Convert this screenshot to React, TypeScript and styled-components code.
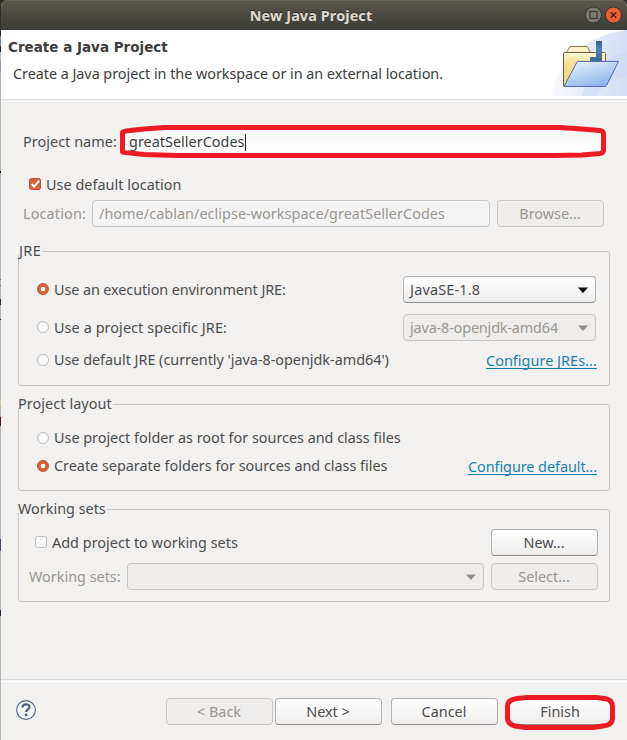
import React from 'react';
import styled, { createGlobalStyle, css } from 'styled-components';

const GlobalStyle = createGlobalStyle`
  * { box-sizing: border-box; }
  body { margin: 0; background: #f2f1f0; overflow: hidden; }
`;

const Desktop = styled.div`
  width: 627px;
  height: 740px;
  padding-left: 1px;
  background: linear-gradient(
    #2f2e2b 0 36px, #5f86a3 36px 46px, #2b2b2b 46px 52px, #b4b6b9 52px 60px, #8e9cb0 60px 72px,
    #b4b4b4 72px 171px, #111 171px 173px, #b0b2b4 173px 279px, #3f7fc0 279px 280px, #b0b2b4 280px 285px,
    #3f7fc0 285px 286px, #aeb2b6 286px 299px, #333 299px 305px, #aeb2b6 305px 319px, #1d1d6a 319px 320px,
    #aeb2b6 320px 399px, #c9cc96 399px 406px, #aeb2b6 406px 417px, #5c0f14 417px 426px, #aeb2b6 426px 539px,
    #3d4a78 539px 551px, #b4b4b4 551px 610px, #20264a 610px 616px, #b4b4b4 616px 740px
  );
  font-family: "Noto Sans", "Open Sans", sans-serif;
  font-size: 14.4px;
  color: #4c4c4c;
`;

const Dialog = styled.div`
  display: flex;
  flex-direction: column;
  width: 626px;
  height: 740px;
  background: #f2f1f0;
  border-radius: 7px 7px 0 0;
  overflow: hidden;
`;

const TitleBar = styled.div`
  position: relative;
  display: flex;
  align-items: center;
  justify-content: center;
  height: 30px;
  padding-right: 6px;
  background: linear-gradient(#5b574c, #3c3b37);
  box-shadow: inset 0 1px #68645a;
  color: #dfdbd2;
  font-weight: 700;
  letter-spacing: 0.12px;
  text-shadow: 0 -1px #2c2b28;
`;

const WindowControls = styled.div`
  position: absolute;
  right: 5px;
  top: 6px;
  display: flex;
  gap: 3px;
`;

const Header = styled.div`
  display: flex;
  justify-content: space-between;
  height: 69px;
  background: #fff;
  color: #3c3c3c;
`;

const HeaderText = styled.div`
  padding: 8px 0 0 7px;
`;

const Title = styled.div`
  font: 700 13.5px/18px "DejaVu Sans", sans-serif;
`;

const Subtitle = styled.div`
  padding: 8px 0 0 5px;
  line-height: 20px;
  letter-spacing: -0.04px;
`;

const Separator = styled.div`
  height: 3px;
  flex: none;
  background: linear-gradient(#dadada 0 1px, #f2f1f0 1px 2px, #fff 2px 3px);
`;

const Body = styled.div`
  flex: 1;
  padding: 23px 0 0 17px;
`;

const Row = styled.div<{ $h: number; $mt?: number; $pl?: number }>`
  display: flex;
  align-items: center;
  height: ${p => p.$h}px;
  margin-top: ${p => p.$mt ?? 0}px;
  padding-left: ${p => p.$pl ?? 0}px;
`;

const Label = styled.span<{ $w?: number; $ls?: number; $off?: boolean }>`
  flex: none;
  width: ${p => (p.$w ? `${p.$w}px` : 'auto')};
  letter-spacing: ${p => p.$ls ?? 0}px;
  line-height: 20px;
  white-space: pre;
  color: ${p => (p.$off ? '#9a9690' : 'inherit')};
`;

const Spacer = styled.div`
  flex: 1;
`;

const disabledSurface = css`
  background: #eeedec;
  border-color: #c8c6c4;
  color: #9a9690;
`;

const ActiveEntry = styled.div`
  position: relative;
  display: flex;
  align-items: center;
  width: 482px;
  height: 28px;
  padding-left: 7px;
  border-radius: 5px;
  background: linear-gradient(#f4f4f4, #fff 70%);
  color: #3c3c3c;
`;

const Caret = styled.i`
  width: 1px;
  height: 17px;
  background: #222;
`;

const Marker = styled.svg`
  position: absolute;
  overflow: visible;
  pointer-events: none;
`;

const EntryMarker = styled(Marker)`
  left: -2px;
  top: -3px;
`;

const ButtonMarker = styled(Marker)`
  left: -3px;
  top: -4px;
`;

const Entry = styled.div`
  display: flex;
  align-items: center;
  width: 398px;
  height: 27px;
  padding-left: 6px;
  border: 1px solid;
  border-radius: 4px;
  ${disabledSurface}
  background: #f5f4f4;
`;

const Button = styled.div<{ $off?: boolean; $ml?: number }>`
  position: relative;
  display: flex;
  align-items: center;
  justify-content: center;
  flex: none;
  width: 107px;
  height: 27px;
  margin-left: ${p => p.$ml ?? 0}px;
  padding-right: 1px;
  border: 1px solid #b3b1af;
  border-bottom-color: #8f8d8b;
  border-radius: 4px;
  background: linear-gradient(#fff, #eeedec);
  ${p => p.$off && disabledSurface}
`;

const Combo = styled.div<{ $w: number; $off?: boolean }>`
  display: flex;
  align-items: center;
  justify-content: space-between;
  width: ${p => p.$w}px;
  height: 27px;
  padding: 0 7px 0 6px;
  border: 1px solid #b3b1af;
  border-bottom-color: #8f8d8b;
  border-radius: 4px;
  background: linear-gradient(#fff, #eeedec);
  ${p => p.$off && disabledSurface}
`;

const Group = styled.div<{ $h: number; $mt: number }>`
  position: relative;
  width: 592px;
  height: ${p => p.$h}px;
  margin-top: ${p => p.$mt}px;
  border: 1px solid #c8c6c4;
  border-radius: 3px;
`;

const Legend = styled.div<{ $ls?: number; $indent?: number }>`
  position: absolute;
  left: -1px;
  top: -12px;
  height: 15px;
  padding: 0 1px 0 ${p => p.$indent ?? 0}px;
  background: #f2f1f0;
  line-height: 21px;
  letter-spacing: ${p => p.$ls ?? 0}px;
  white-space: nowrap;
`;

const Radio = styled.i<{ $on?: boolean }>`
  flex: none;
  width: 12px;
  height: 12px;
  margin: 0 5px 1px 0;
  border: 1px solid ${p => (p.$on ? '#b5512e' : '#bdbbb9')};
  border-radius: 50%;
  background: ${p =>
    p.$on ? 'radial-gradient(circle, #fff 0 1.9px, #d9623a 2.6px)' : 'linear-gradient(#f6f6f6, #fff)'};
`;

const Link = styled.span<{ $ls?: number }>`
  height: 18px;
  border-bottom: 1px solid #007ea8;
  color: #1583ad;
  line-height: 20px;
  letter-spacing: ${p => p.$ls ?? 0}px;
  white-space: nowrap;
`;

const Footer = styled.div`
  display: flex;
  align-items: flex-start;
  height: 58px;
  padding: 16px 0 0 15px;
`;

const Arrow = ({ off }: { off?: boolean }) => (
  <svg width="10" height="6" viewBox="0 0 10 6">
    <path d="M0 .5h10L5 6z" fill={off ? '#918f8a' : '#000'} />
  </svg>
);

const CheckBox = styled.svg`
  flex: none;
  margin: 0 5px 2px 0;
`;

const Check = ({ on }: { on?: boolean }) => (
  <CheckBox width="12" height="12" viewBox="0 0 12 12">
    <rect x=".5" y=".5" width="11" height="11" rx="2" fill={on ? '#d9623a' : '#fbfbfb'} stroke={on ? '#b5512e' : '#bdbbb9'} />
    {on && <path d="M2.700 5.800l2.400 2.800L10.200 2.600" fill="none" stroke="#fff" strokeWidth="2" />}
  </CheckBox>
);

const FolderBanner = () => (
  <svg width="75" height="69" viewBox="0 0 75 69">
    <defs>
      <linearGradient id="sky" x1="0" x2="1"><stop offset="0" stopColor="#f7f9fd" /><stop offset="1" stopColor="#d3def4" /></linearGradient>
      <linearGradient id="back" x1="0" y1="0" x2="0" y2="1"><stop offset="0" stopColor="#fffbe0" /><stop offset=".3" stopColor="#f4e190" /><stop offset="1" stopColor="#efd472" /></linearGradient>
      <linearGradient id="front" x1="0" y1="0" x2=".6" y2="1"><stop offset="0" stopColor="#eef9ff" /><stop offset="1" stopColor="#8fb4ea" /></linearGradient>
      <linearGradient id="jay" x1="0" y1="0" x2="0" y2="1"><stop offset="0" stopColor="#2f608d" /><stop offset=".4" stopColor="#4f86b3" /><stop offset="1" stopColor="#35668f" /></linearGradient>
    </defs>
    <path d="M0 66C4 40 22 8 75 0v66z" fill="url(#sky)" />
    <path d="M30 66C36 40 52 27 75 22v24C62 48 48 56 46 66z" fill="#c9d7f3" opacity=".5" />
    <path d="M14.500 22.500l3.500-6h17l3.500 6" fill="#fdf3c4" stroke="#8d7455" />
    <path d="M11.500 56V23.500q0-1 1-1H52.500q1 0 1 1V56z" fill="url(#back)" stroke="#775a45" />
    <path d="M44 11h6v21H38v-5h6z" fill="url(#jay)" />
    <path d="M12 56.500L25 32q.4-.6 1-.6h40.500L54.500 55.500q-.5 1-1.500 1z" fill="url(#front)" stroke="#5268b4" strokeLinejoin="round" />
  </svg>
);

export default function App() {
  return (
    <Desktop>
      <GlobalStyle />
      <Dialog>
        <TitleBar>
          New Java Project
          <WindowControls>
            <svg width="17" height="18" viewBox="0 0 17 18">
              <circle cx="8.500" cy="9" r="8" fill="#7b7972" stroke="#35342f" />
              <rect x="5" y="5.500" width="7" height="7" fill="none" stroke="#3a3935" strokeWidth="1.200" />
            </svg>
            <svg width="17" height="18" viewBox="0 0 17 18">
              <circle cx="8.500" cy="9" r="8" fill="#ed6036" stroke="#35342f" />
              <path d="M5.800 6.300l5.400 5.400M11.200 6.300l-5.400 5.400" stroke="#472014" strokeWidth="1.400" />
            </svg>
          </WindowControls>
        </TitleBar>
        <Header>
          <HeaderText>
            <Title>Create a Java Project</Title>
            <Subtitle>Create a Java project in the workspace or in an external location.</Subtitle>
          </HeaderText>
          <FolderBanner />
        </Header>
        <Separator />
        <Body>
          <Row $h={34} $pl={5}>
            <Label $w={99} $ls={0.05}>Project name:</Label>
            <ActiveEntry>
              <Label $ls={0.03}>greatSellerCodes</Label>
              <Caret />
              <EntryMarker width="488" height="34" viewBox="0 0 488 34">
                <path d="M2.500 27V7.500Q3 6 10 5.500L24 4 45 2.500H440L462 4 480 5.500Q483.500 6 483.500 9V25Q483.500 28 480 28.500L462 30 435 30.500H58L24 29.500 10 28Q3 28 2.500 27z" fill="none" stroke="#ed1c24" strokeWidth="5" />
              </EntryMarker>
            </ActiveEntry>
          </Row>
          <Row $h={20} $mt={16} $pl={11}>
            <Check on />
            <Label $ls={0.04}>Use default location</Label>
          </Row>
          <Row $h={27} $mt={5} $pl={5}>
            <Label $w={69} $ls={0.15} $off>Location:</Label>
            <Entry><Label $ls={0.05}>/home/cablan/eclipse-workspace/greatSellerCodes</Label></Entry>
            <Button $off $ml={7}>Browse...</Button>
          </Row>
          <Group $h={135} $mt={24}>
            <Legend $ls={0.4} $indent={1}>JRE</Legend>
            <Row $h={27} $mt={24} $pl={18}>
              <Radio $on />
              <Label $w={349} $ls={-0.09}>Use an execution environment JRE:</Label>
              <Combo $w={193}><Label $ls={0.2}>JavaSE-1.8</Label><Arrow /></Combo>
            </Row>
            <Row $h={27} $mt={11} $pl={18}>
              <Radio />
              <Label $w={349} $ls={0.09}>Use a project specific JRE:</Label>
              <Combo $w={193} $off><Label $ls={-0.15}>java-8-openjdk-amd64</Label><Arrow off /></Combo>
            </Row>
            <Row $h={20} $mt={9} $pl={18}>
              <Radio />
              <Label $w={432} $ls={-0.02}>Use default JRE (currently 'java-8-openjdk-amd64')</Label>
              <Link $ls={0.05}>Configure JREs...</Link>
            </Row>
          </Group>
          <Group $h={87} $mt={18}>
            <Legend $ls={0.08}>Project layout</Legend>
            <Row $h={20} $mt={23} $pl={18}>
              <Radio />
              <Label $ls={-0.01}>Use project folder as root for sources and class files</Label>
            </Row>
            <Row $h={20} $mt={8} $pl={18}>
              <Radio $on />
              <Label $w={414} $ls={-0.01}>Create separate folders for sources and class files</Label>
              <Link $ls={-0.05}>Configure default...</Link>
            </Row>
          </Group>
          <Group $h={93} $mt={18}>
            <Legend>Working sets</Legend>
            <Row $h={27} $mt={19} $pl={16}>
              <Check on={false} />
              <Label $w={439} $ls={0.03}>Add project to working sets</Label>
              <Button>New...</Button>
            </Row>
            <Row $h={27} $mt={7} $pl={10}>
              <Label $w={98} $off>Working sets:</Label>
              <Combo $w={357} $off><Spacer /><Arrow off /></Combo>
              <Button $off $ml={7}>Select...</Button>
            </Row>
          </Group>
        </Body>
        <Separator />
        <Footer>
          <svg width="20" height="24" viewBox="0 0 20 24">
            <circle cx="10" cy="12" r="9.400" fill="#f4f6f9" stroke="#4d5f80" strokeWidth="1.100" />
            <path d="M6.400 9.500C6.400 5.300 13.500 5.300 13.500 9c0 2.400-3.400 2.500-3.400 5" fill="none" stroke="#4d5f80" strokeWidth="2.200" />
            <circle cx="10.100" cy="17" r="1.400" fill="#4d5f80" />
          </svg>
          <Button $off $ml={130}>&lt; Back</Button>
          <Button $ml={2}>Next &gt;</Button>
          <Button $ml={9}>Cancel</Button>
          <Button $ml={9}>
            Finish
            <ButtonMarker width="112" height="36" viewBox="0 0 112 36">
              <path d="M2.500 11Q2.500 5 12 3.500L22 2.500H92L102 4Q107 6 107.500 11V24Q107 30 98 31L88 32.500H20L10 31Q3 29 2.500 24z" fill="none" stroke="#ed1c24" strokeWidth="5" />
            </ButtonMarker>
          </Button>
        </Footer>
      </Dialog>
    </Desktop>
  );
}
